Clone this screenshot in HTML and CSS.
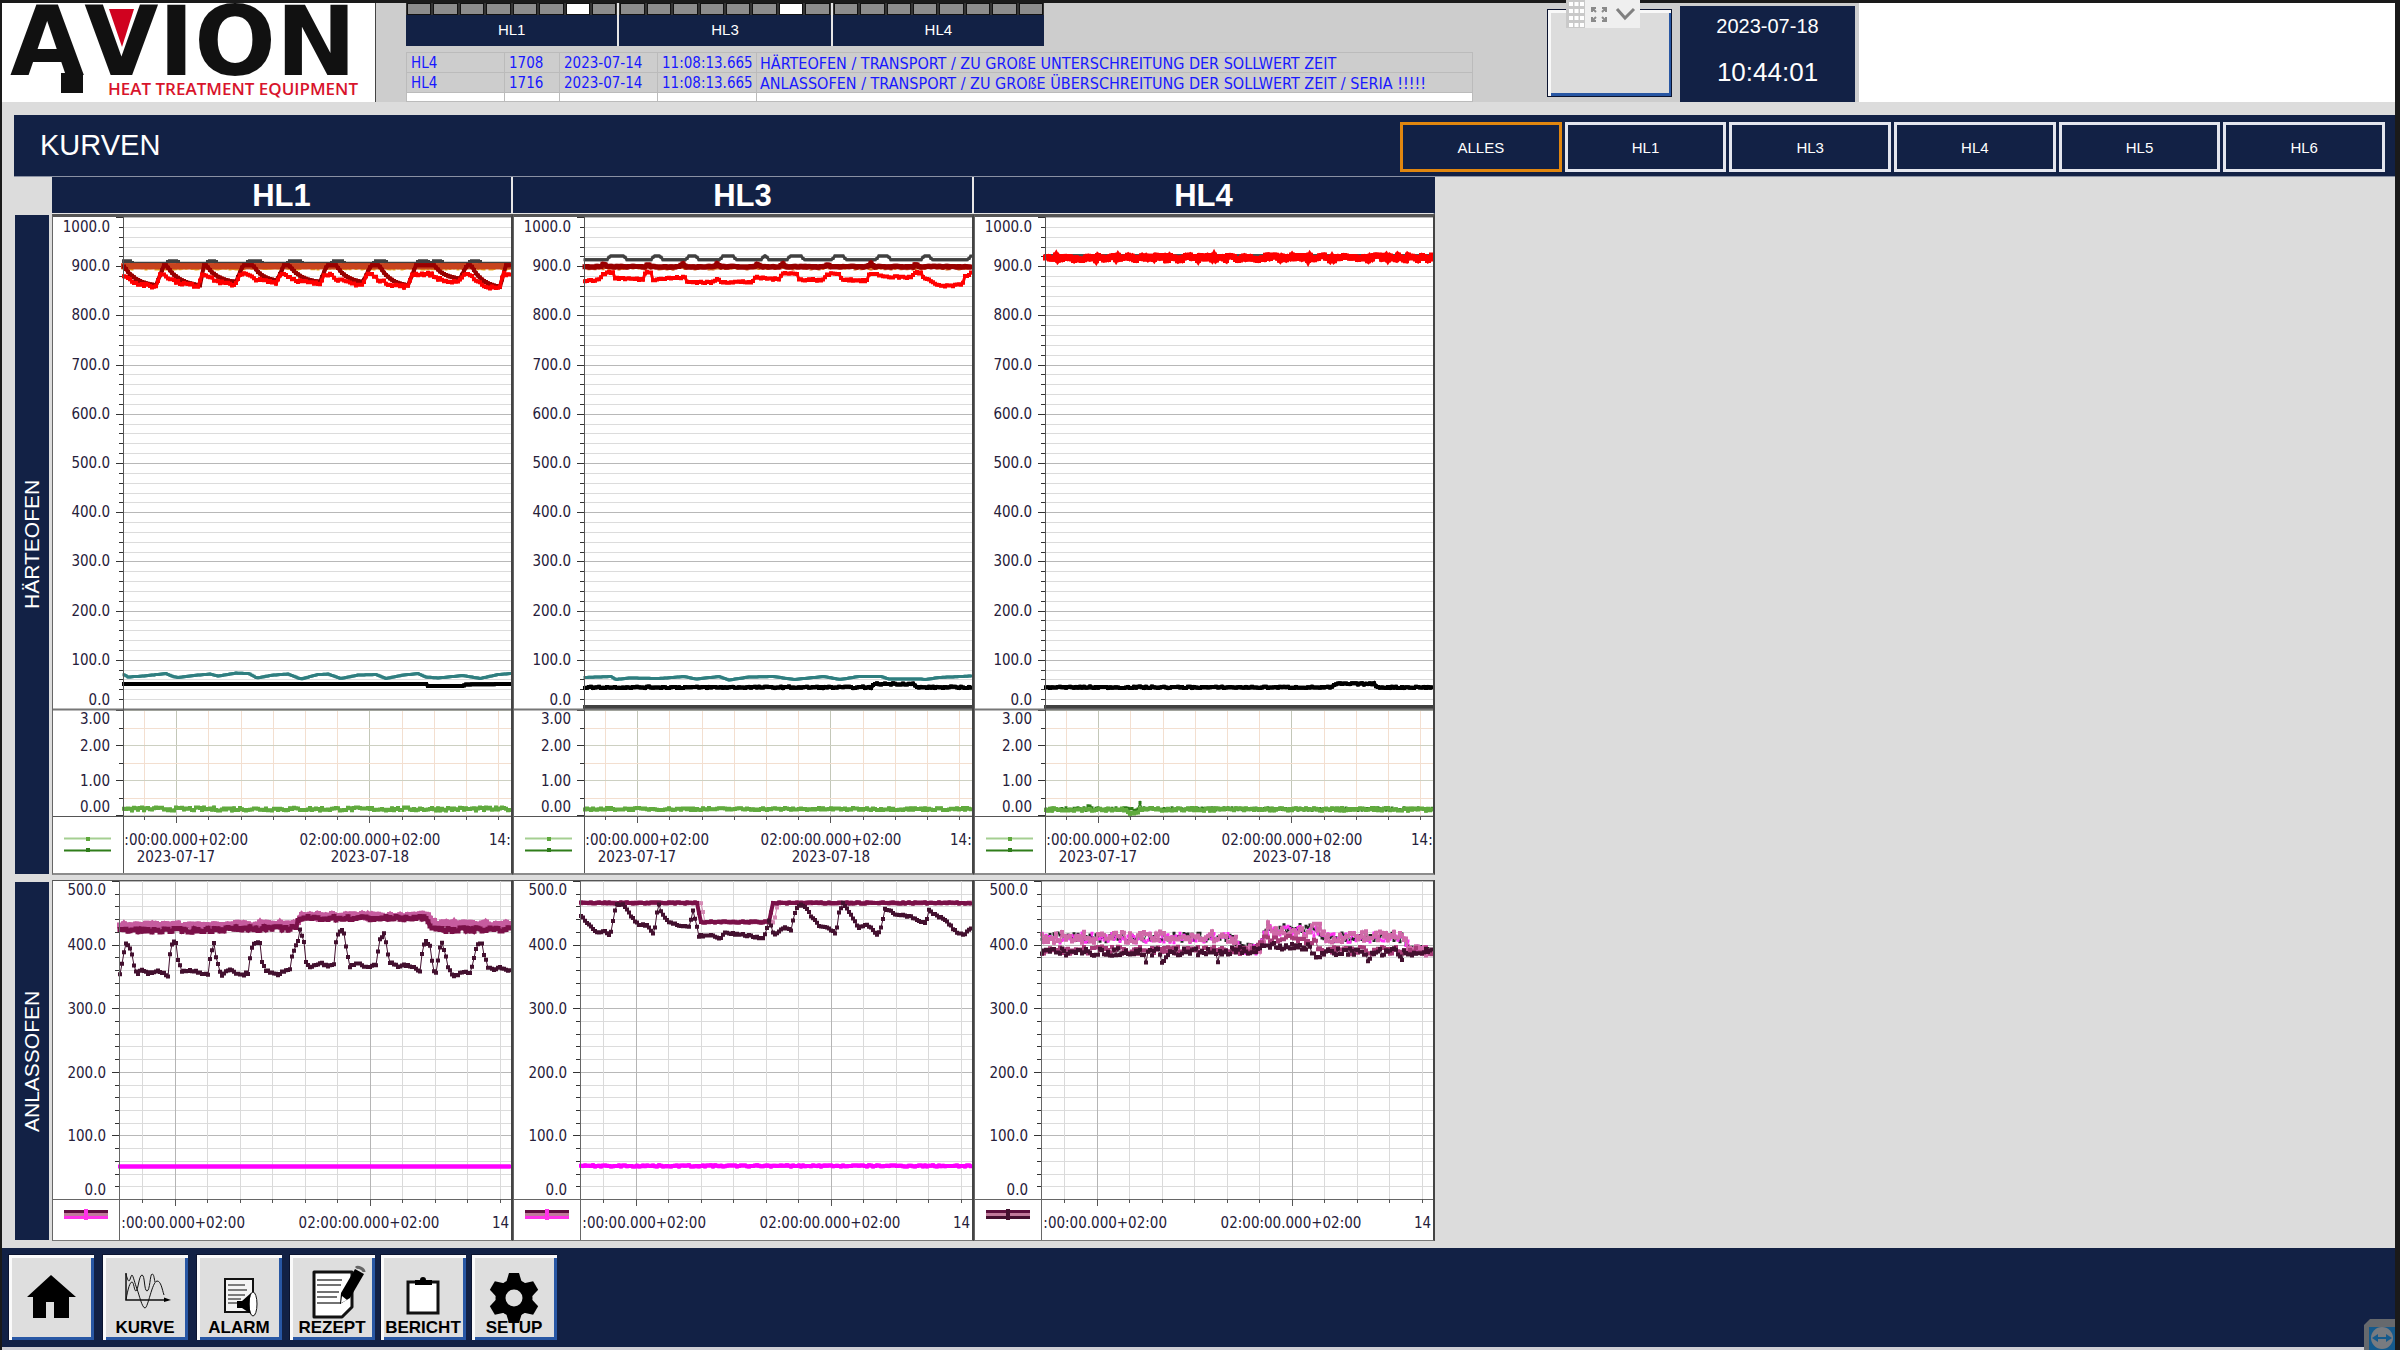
FILE: index.html
```html
<!DOCTYPE html>
<html lang="de">
<head>
    <meta charset="UTF-8">
    <meta name="viewport" content="width=device-width, initial-scale=1.0">
    <title>AVION - Kurven</title>
    <link rel="stylesheet" href="styles.css">
</head>
<body>
    <header class="topbar">
        <div class="logo">
            <span class="logo-name">AVION</span>
            <span class="logo-claim">HEAT TREATMENT EQUIPMENT</span>
            <svg class="logo-mark" viewBox="0 0 373 99" aria-hidden="true">
                <path d="M107 6h25l-12 38z" fill="#d0021f"/>
                <path d="M59 70h22v20H59z" fill="#111"/>
            </svg>
        </div>

        <div class="monitor">
            <div class="tabs">
                <button class="tab"><span class="lamps"><i></i><i></i><i></i><i></i><i></i><i></i><i class="on"></i><i></i></span>HL1</button>
                <button class="tab"><span class="lamps"><i></i><i></i><i></i><i></i><i></i><i></i><i class="on"></i><i></i></span>HL3</button>
                <button class="tab"><span class="lamps"><i></i><i></i><i></i><i></i><i></i><i></i><i></i><i></i></span>HL4</button>
            </div>
            <table class="alarms">
                <colgroup>
                    <col class="col-line"><col class="col-code"><col class="col-date"><col class="col-time"><col>
                </colgroup>
                <tbody>
                    <tr><td>HL4</td><td>1708</td><td>2023-07-14</td><td>11:08:13.665</td><td class="msg">HÄRTEOFEN / TRANSPORT / ZU GROßE UNTERSCHREITUNG DER SOLLWERT ZEIT</td></tr>
                    <tr><td>HL4</td><td>1716</td><td>2023-07-14</td><td>11:08:13.665</td><td class="msg">ANLASSOFEN / TRANSPORT / ZU GROßE ÜBERSCHREITUNG DER SOLLWERT ZEIT / SERIA !!!!!</td></tr>
                    <tr class="empty"><td></td><td></td><td></td><td></td><td></td></tr>
                </tbody>
            </table>
        </div>

        <button class="blank-button" aria-label="Quittieren"></button>

        <div class="clock">
            <span class="date">2023-07-18</span>
            <span class="time">10:44:01</span>
        </div>
        <div class="blank"></div>
    </header>

    <!-- remote session toolbar -->
    <div class="remote-bar">
        <svg viewBox="0 0 74 28" aria-hidden="true">
            <path d="M0 0h19v28H0z" fill="#c9c9c9"/>
            <path d="M19 0h55v28H19z" fill="#efefef"/>
            <path d="M3 4h16M3 11h16M3 18h16M3 25h16" stroke="#fff" stroke-width="4" stroke-dasharray="4 1.500"/>
            <path d="M30 12l-4-4m0 4V8h4M36 12l4-4m-4 0h4v4M30 17l-4 4m0-4v4h4M36 17l4 4m-4 0h4v-4" fill="none" stroke="#8a8a8a" stroke-width="2"/>
            <path d="M51 9l8 9 9-9" fill="none" stroke="#808080" stroke-width="3"/>
        </svg>
    </div>

    <main>
        <div class="titlebar">
            <h1>KURVEN</h1>
            <nav class="filters">
                <button class="active">ALLES</button>
                <button>HL1</button>
                <button>HL3</button>
                <button>HL4</button>
                <button>HL5</button>
                <button>HL6</button>
            </nav>
        </div>

        <div class="curves">
            <h2 class="first">HL1</h2>
            <h2>HL3</h2>
            <h2 class="last">HL4</h2>

            <div class="side upper">HÄRTEOFEN</div>
            <div class="chart upper" id="hard1"></div>
            <div class="chart upper" id="hard3"></div>
            <div class="chart upper" id="hard4"></div>

            <div class="side lower">ANLASSOFEN</div>
            <div class="chart lower" id="temper1"></div>
            <div class="chart lower" id="temper3"></div>
            <div class="chart lower" id="temper4"></div>
        </div>
    </main>

    <footer class="bottombar">
        <div class="nav-group wide">
            <button aria-label="Home">
                <svg viewBox="0 0 86 86"><path d="M19 43L43 21l25 22h-7v21H46V48h-8v16H25V43z"/></svg>
            </button>
            <button>
                <svg viewBox="0 0 86 86">
                    <g fill="none" stroke="#111">
                        <path d="M24 19v27h42" stroke-width="1.500"/>
                        <path d="M24 46c2-12 4-18 6-18s2 9 4 9 3-16 6-16 2 16 5 16 3-17 5-17 2 4 3 8"/>
                        <path d="M24 20c1 4 2 7 3 7s2-6 3-6 3 9 5 14 5 19 8 19 7-26 12-27c4 0 5 8 7 14"/>
                    </g>
                    <path d="M62 43.500l7 2.500-7 2z"/>
                </svg>
                <span>KURVE</span>
            </button>
            <button>
                <svg viewBox="0 0 86 86">
                    <path d="M29 25h28v33H29z" fill="#f4f4f4" stroke="#111" stroke-width="2"/>
                    <path d="M32 31h17M32 36h19M32 41h17M32 45h13M32 49h9" stroke="#555" stroke-width="1.500"/>
                    <ellipse cx="57" cy="50" rx="4" ry="12" fill="#fff" stroke="#111"/>
                    <path d="M41 47h5l9-8c-2 7-2 15 0 21l-9-6h-5z"/>
                </svg>
                <span>ALARM</span>
            </button>
        </div>
        <div class="nav-group">
            <button>
                <svg viewBox="0 0 86 86">
                    <path d="M25 18h38v35L53 63H25z" fill="#fff" stroke="#111" stroke-width="3" stroke-linejoin="round"/>
                    <path d="M28 26h25M28 31h24M28 38h22M28 43h20M28 49h24" stroke="#444" stroke-width="1.500"/>
                    <path d="M51 50l1-11 14-24 9 5-14 24z"/>
                    <path d="M52 49l1-7 5 4z" fill="#fff"/>
                    <path d="M67 14c2-2 8 1 8 4" fill="none" stroke="#666" stroke-width="3"/>
                </svg>
                <span>REZEPT</span>
            </button>
            <button>
                <svg viewBox="0 0 86 86">
                    <path d="M28 28h30v31H28z" fill="#fff" stroke="#111" stroke-width="3"/>
                    <path d="M35 31v-5h5q0-3 3-3t3 3h6v5z"/>
                </svg>
                <span>BERICHT</span>
            </button>
            <button>
                <svg viewBox="0 0 86 86">
                    <circle cx="43" cy="44" r="13.500" fill="none" stroke="#000" stroke-width="10"/>
                    <path id="tooth" d="M35 29l3-10h10l3 10z"/>
                    <use href="#tooth" transform="rotate(60 43 44)"/>
                    <use href="#tooth" transform="rotate(120 43 44)"/>
                    <use href="#tooth" transform="rotate(180 43 44)"/>
                    <use href="#tooth" transform="rotate(240 43 44)"/>
                    <use href="#tooth" transform="rotate(300 43 44)"/>
                </svg>
                <span>SETUP</span>
            </button>
        </div>
    </footer>

    <div class="remote-badge">
        <svg viewBox="0 0 31 31" aria-hidden="true">
            <path d="M0 31V6l6-6h25v31z" fill="#66696d"/>
            <path d="M5 8h26v23H5z" fill="#155a8c"/>
            <circle cx="18" cy="19" r="11" fill="#787b80"/>
            <path d="M8 19l6-4v3h8v-3l6 4-6 4v-3h-8v3z" fill="#155a8c"/>
        </svg>
    </div>

    <script src="charts.js"></script>
</body>
</html>
```
FILE: styles.css
```css
* {
    margin: 0;
    padding: 0;
    box-sizing: border-box;
}

body {
    display: flex;
    flex-direction: column;
    min-height: 100vh;
    border: 0 solid #1a1a1a;
    border-width: 3px 5px 0 2px;
    background: #dcdcdc;
    font-family: "Liberation Sans", Arial, sans-serif;
}

button {
    font-family: inherit;
    border: none;
    border-radius: 0;
    cursor: pointer;
}

/* top bar */
.topbar {
    display: flex;
    height: 99px;
    background: #cdcdcd;
}

.logo {
    display: grid;
    width: 374px;
    background: #fff;
    border-right: 1px solid #444;
}

.logo > * {
    grid-area: 1 / 1;
}

.logo-name {
    padding-left: 8px;
    font-family: "DejaVu Sans", sans-serif;
    font-weight: 700;
    font-size: 96px;
    font-kerning: none;
    line-height: 78px;
    color: #111;
}

.logo-claim {
    align-self: end;
    justify-self: end;
    padding: 0 17px 3px 0;
    font-family: "Open Sans", sans-serif;
    font-weight: 600;
    font-size: 17px;
    line-height: 20px;
    color: #d8142c;
}

.logo-mark {
    width: 373px;
    height: 99px;
}

.monitor {
    display: flex;
    flex-direction: column;
    gap: 6px;
    width: 1067px;
    margin-left: 30px;
}

.tabs {
    display: flex;
    gap: 2px;
    width: 638px;
    height: 43px;
    background: #e6e6e6;
}

.tab {
    display: flex;
    flex: 1;
    flex-direction: column;
    align-items: center;
    gap: 6px;
    background: #122145;
    color: #fff;
    font-size: 15px;
}

.lamps {
    display: flex;
    gap: 2px;
    width: 100%;
    padding: 0 1px;
    background: #333;
}

.lamps i {
    flex: 1;
    height: 12px;
    background: #8c8c8c;
    border: 1px solid #111;
}

.lamps .on {
    background: #fff;
}

.alarms {
    width: 100%;
    table-layout: fixed;
    border-collapse: collapse;
    border: 1px solid #85877a;
    font-family: "DejaVu Sans Condensed", "Noto Sans", sans-serif;
    font-size: 15px;
    line-height: 17px;
    color: #1818ff;
}

.col-line { width: 98px; }
.col-code { width: 55px; }
.col-date { width: 98px; }
.col-time { width: 99px; }

.alarms td {
    height: 19px;
    padding: 2px 0 0 4px;
    border: 1px solid #bbb;
    white-space: nowrap;
}

.alarms .msg {
    padding-left: 3px;
    font-size: 16px;
}

.alarms .empty td {
    height: 9px;
    padding: 0;
    background: #fff;
}

.blank-button {
    width: 125px;
    height: 88px;
    margin: 6px 8px 0 74px;
    background: #dcdcdc;
    border: 1px solid #0b1430;
    box-shadow: inset 3px 3px #f8f8f8, inset -2px -3px #2857a4;
}

.clock {
    display: flex;
    flex-direction: column;
    align-items: center;
    width: 175px;
    margin: 3px 4px 0 0;
    padding-top: 8px;
    background: #122145;
    color: #fff;
}

.clock .date {
    font-size: 20px;
    line-height: 24px;
}

.clock .time {
    padding-top: 18px;
    font-size: 26px;
    line-height: 32px;
}

.blank {
    flex: 1;
    background: #fff;
}

.remote-bar {
    position: absolute;
    top: 0;
    left: 1566px;
    width: 74px;
    height: 28px;
}

/* content */
main {
    padding: 13px 0 7px 12px;
}

.titlebar {
    display: flex;
    justify-content: space-between;
    align-items: center;
    height: 62px;
    padding: 0 10px 0 26px;
    background: #122145;
    border-bottom: 1px solid #8a91a3;
    color: #fff;
}

.titlebar h1 {
    font-size: 29px;
    font-weight: 400;
}

.filters {
    display: flex;
    gap: 3px;
    width: 985px;
}

.filters button {
    flex: 1;
    height: 50px;
    margin-top: 2px;
    padding-top: 2px;
    background: #122145;
    border: 3px solid #e4e6ee;
    color: #fff;
    font-size: 15px;
}

.filters .active {
    border-color: #e0860f;
}

/* five line columns, only the selected lines are filled */
.curves {
    display: grid;
    grid-template-columns: 38px repeat(5, 1fr);
    padding-right: 38px;
}

.curves h2 {
    height: 37px;
    background: #122145;
    border-right: 2px solid #e6e6e6;
    border-bottom: 1px solid #e6e6e6;
    color: #fff;
    font-size: 31px;
    line-height: 37px;
    text-align: center;
}

.curves .first {
    grid-column: 2;
}

.curves .last {
    border-right-color: #122145;
}

.side {
    grid-column: 1;
    display: flex;
    align-items: center;
    justify-content: center;
    margin: 1px 3px 1px 1px;
    writing-mode: vertical-rl;
    transform: rotate(180deg);
    background: #122145;
    color: #fff;
    font-size: 21px;
}

.chart {
    background: #fff;
    border-left: 1px solid #666;
    border-right: 2px solid #444;
}

.chart svg {
    display: block;
    width: 100%;
    height: auto;
}

.chart.upper {
    border-top: 3px solid #555;
    border-bottom: 2px solid #8c8c8c;
}

.chart.lower {
    margin-top: 5px;
    border-top: 1px solid #555;
    border-bottom: 1px solid #777;
}

.side.lower {
    margin-top: 7px;
}

.chart text {
    font-family: "DejaVu Sans Condensed", "Noto Sans", sans-serif;
    font-size: 15px;
    fill: #26203a;
}

/* bottom bar */
.bottombar {
    display: flex;
    gap: 7px;
    height: 102px;
    margin-top: auto;
    padding: 6px 6px 0;
    background: #122145;
    border-bottom: 3px solid #cfcfd4;
}

.nav-group {
    display: flex;
    gap: 5px;
}

.nav-group.wide {
    gap: 8px;
}

.nav-group button {
    display: grid;
    width: 86px;
    height: 86px;
    background: #dedede;
    box-shadow: inset 1px 1px #0b1430, inset 4px 4px #fafafa, inset -3px -3px #2857a4;
}

.nav-group svg,
.nav-group span {
    grid-area: 1 / 1;
}

.nav-group svg {
    width: 86px;
    height: 86px;
}

.nav-group span {
    align-self: end;
    justify-self: center;
    padding-bottom: 2px;
    font-size: 17px;
    font-weight: 700;
    color: #000;
}

.remote-badge {
    position: fixed;
    right: 5px;
    bottom: 0;
    width: 31px;
    height: 31px;
}
```
FILE: charts.js
```js
const WIDTH = 458;

// small seeded random so the curves look the same on every load
let seed = 7;
function rnd() {
    seed = (seed * 16807) % 2147483647;
    return seed / 2147483647 * 2 - 1;
}

// "x:value x:value ..." -> points
function pts(text) {
    return text.trim().split(/\s+/).map(p => p.split(':').map(Number));
}

function flat(v) {
    return [[0, v], [400, v]];
}

function bumps(base, high, ranges) {
    const out = [[0, base]];
    ranges.forEach(([a, b]) => out.push([a - 2, base], [a + 1, high], [b, high], [b + 3, base]));
    out.push([400, base]);
    return out;
}

// heat up, hold, then cool down exponentially
function decays(high, cycles) {
    const out = [];
    cycles.forEach(([start, hold, end, low]) => {
        out.push([start, high], [hold, high]);
        for (let i = 1; i <= 5; i++) {
            const t = i / 5;
            out.push([hold + (end - hold) * t, low + (high - low) * (Math.exp(-2.5 * t) - 0.08) / 0.92]);
        }
    });
    return out;
}

function valueAt(points, x) {
    for (let i = 1; i < points.length; i++) {
        if (x <= points[i][0]) {
            const [x0, v0] = points[i - 1];
            const [x1, v1] = points[i];
            return x1 === x0 ? v1 : v0 + (v1 - v0) * Math.max(0, x - x0) / (x1 - x0);
        }
    }
    return points[points.length - 1][1];
}

function drawSeries(s, left, toY) {
    let line = '';
    let dots = '';
    for (let x = 1; left + x < WIDTH; x += 2) {
        const y = toY(valueAt(s.points, x) + rnd() * (s.noise || 0)).toFixed(1);
        line += (line ? 'L' : 'M') + (left + x) + ' ' + y;
        dots += `M${left + x} ${y}h0`;
    }
    return `<path d="${line}" fill="none" stroke="${s.color}" stroke-width="${s.line || s.size / 2}"/>` +
        `<path d="${dots}" stroke="${s.color}" stroke-width="${s.size}" stroke-linecap="square"/>`;
}

function hline(x1, x2, y, color, w) {
    return `<path d="M${x1} ${Math.round(y) + 0.5}H${x2}" stroke="${color}" stroke-width="${w || 1}"/>`;
}

function vline(x, y1, y2, color, w) {
    return `<path d="M${Math.round(x) + 0.5} ${y1}V${y2}" stroke="${color}" stroke-width="${w || 1}"/>`;
}

function text(x, y, anchor, str) {
    return `<text x="${x}" y="${y}" text-anchor="${anchor}">${str}</text>`;
}

function timeAxis(top, first, step, gridTop, major, minor) {
    let grid = '';
    let ticks = '';
    for (let i = 0; i < 12; i++) {
        const isMajor = i % 6 === 1;
        const x = first + i * step;
        grid += vline(x, gridTop, top, isMajor ? major : minor);
        ticks += vline(x, top, top + (isMajor ? 7 : 4), '#555');
    }
    return { grid, ticks };
}

function valueAxis(left, top, bottom, count, sub, major, minor) {
    let out = '';
    const step = (bottom - top) / (count * sub);
    for (let i = 0; i <= count * sub; i++) {
        const isMajor = i % sub === 0;
        const y = top + i * step;
        out += hline(left, WIDTH, y, isMajor ? major : minor);
        out += hline(isMajor ? left - 7 : left - 4, left, y, '#333');
    }
    return out;
}

function hardening(id, series, green) {
    const left = 70;
    const time = timeAxis(599, 91, 32.2, 494, '#c3c7b8', '#f3dfd0');
    let svg = valueAxis(left, 0, 492, 10, 5, '#b8b8b8', '#dcdcdc');
    svg += time.grid + valueAxis(left, 493, 598, 3, 2, '#cdd0c2', '#f3dfd0');
    series.forEach(s => svg += drawSeries(s, left, v => 492 - v * 0.492));
    svg += hline(0, WIDTH, 492, '#777', 2);
    green.forEach(s => svg += drawSeries(s, left, v => 598 - v * 35));
    svg += hline(0, WIDTH, 599, '#555') + time.ticks + vline(left, 0, 656, '#555');

    svg += text(57, 15, 'end', '1000.0');
    for (let v = 900; v > 0; v -= 100) {
        svg += text(57, Math.round(497 - v * 0.492), 'end', v + '.0');
    }
    svg += text(57, 488, 'end', '0.0');
    svg += text(57, 507, 'end', '3.00') + text(57, 534, 'end', '2.00');
    svg += text(57, 569, 'end', '1.00') + text(57, 595, 'end', '0.00');

    svg += text(195, 628, 'end', ':00:00.000+02:00') + text(123, 645, 'middle', '2023-07-17');
    svg += text(317, 628, 'middle', '02:00:00.000+02:00') + text(317, 645, 'middle', '2023-07-18');
    svg += text(436, 628, 'start', '14:');

    svg += hline(11, 58, 621, '#a5cf92', 2) + '<path d="M33 620h4v4h-4z" fill="#5fa83c"/>';
    svg += hline(11, 58, 633, '#2f7d1a', 2) + '<path d="M33 631h4v4h-4z" fill="#2f7d1a"/>';
    document.getElementById(id).innerHTML = `<svg viewBox="0 0 ${WIDTH} 656">${svg}</svg>`;
}

function tempering(id, series, lastColor) {
    const left = 66;
    const time = timeAxis(318, 89, 32.5, 0, '#b5b5b5', '#dadada');
    let svg = valueAxis(left, 0, 318, 5, 5, '#b8b8b8', '#dcdcdc') + time.grid;
    series.forEach(s => svg += drawSeries(s, left, v => 318 - v * 0.6366));
    svg += hline(0, WIDTH, 318, '#666') + time.ticks + vline(left, 0, 359, '#666');

    svg += text(53, 14, 'end', '500.0');
    for (let v = 400; v > 0; v -= 100) {
        svg += text(53, Math.round(324 - v * 0.6366), 'end', v + '.0');
    }
    svg += text(53, 314, 'end', '0.0');
    svg += text(192, 347, 'end', ':00:00.000+02:00') + text(316, 347, 'middle', '02:00:00.000+02:00');
    svg += text(439, 347, 'start', '14');

    svg += '<path d="M11 329h44v3H11z" fill="#5d0f3d"/><path d="M11 332h44v3H11z" fill="#c07a9a"/>';
    svg += `<path d="M11 335h44v3H11z" fill="${lastColor}"/><path d="M31 328h4v11h-4z" fill="${lastColor}"/>`;
    document.getElementById(id).innerHTML = `<svg viewBox="0 0 ${WIDTH} 359">${svg}</svg>`;
}

const GREEN = '#60aa3e';
const WINE = '#7a1048';
const PINK = '#c65c9f';
const PLUM = '#43102f';

hardening('hard1', [
    { color: '#404040', size: 4, points: bumps(905, 910, [[0, 7], [45, 54], [85, 92], [125, 137], [166, 177], [210, 219], [252, 262], [295, 304], [310, 318], [347, 356]]) },
    { color: '#e8b020', size: 3, noise: 2, points: flat(896) },
    { color: '#c8431e', size: 6, line: 6, points: flat(900) },
    { color: '#990000', size: 4, line: 4, points: decays(902, [[0, 0, 33, 861], [41, 43, 77, 861], [81, 83, 113, 868], [120, 130, 154, 871], [161, 166, 197, 868], [204, 213, 240, 868], [248, 256, 285, 861], [293, 311, 337, 875], [344, 348, 377, 858], [383, 388, 400, 880]]) },
    { color: '#ff0000', size: 4, line: 3, noise: 3, points: decays(884, [[0, 0, 33, 858], [37, 41, 76, 860], [78, 83, 112, 862], [117, 123, 154, 867], [157, 162, 197, 864], [201, 207, 240, 862], [244, 248, 285, 858], [289, 308, 336, 866], [340, 347, 376, 854], [380, 388, 400, 880]]) },
    { color: '#2f7f80', size: 3, line: 3, points: pts('0:71 5:65 20:67 43:72 50:66 55:64 70:68 87:71 95:67 113:73 126:72 134:63 150:69 165:71 178:61 195:70 205:71 218:62 235:69 253:70 263:62 280:69 295:72 303:65 315:63 340:68 357:62 375:70 387:72') },
    { color: '#000', size: 4, line: 4, points: pts('0:51 303:51 305:47 340:47 343:50 400:51') }
], [{ color: GREEN, size: 4, line: 3, noise: 0.045, points: flat(0.17) }]);

hardening('hard3', [
    { color: '#404040', size: 3, line: 3, points: bumps(913, 921, [[25, 40], [69, 76], [104, 112], [138, 149], [179, 182], [205, 217], [250, 259], [294, 304], [339, 345], [386, 390]]) },
    { color: '#d8702a', size: 3, noise: 3, points: flat(897) },
    { color: '#990000', size: 5, line: 5, noise: 1, points: bumps(899, 905, [[19, 20], [63, 64], [98, 99], [132, 133], [173, 174], [198, 199], [243, 244], [286, 287], [331, 332]]) },
    { color: '#ff0000', size: 4, line: 3, noise: 2, points: pts('0:871 16:872 18:885 30:888 31:876 60:873 61:887 68:889 69:873 95:877 101:877 103:868 130:867 132:875 138:868 168:868 172:877 195:873 198:887 213:884 215:873 240:872 243:884 255:885 256:874 283:870 285:884 297:882 298:879 328:877 330:888 337:886 340:875 345:872 350:864 360:859 378:862 381:880 388:886') },
    { color: '#2f7f80', size: 3, line: 3, points: pts('0:64 27:66 32:60 45:63 75:62 100:66 112:61 135:66 145:59 165:65 190:66 210:60 240:66 256:60 275:66 297:66 305:61 335:61 342:60 355:64 387:67') },
    { color: '#000', size: 4, line: 4, noise: 1.5, points: pts('0:44 288:44 290:51 330:51 332:44 400:44') },
    { color: '#404040', size: 4, line: 4, points: flat(4) }
], [{ color: GREEN, size: 4, line: 3, noise: 0.03, points: flat(0.17) }]);

hardening('hard4', [
    { color: '#445555', size: 4, line: 4, points: flat(921) },
    { color: '#ff0000', size: 6, line: 6, noise: 5, points: flat(917) },
    { color: '#000', size: 4, line: 4, noise: 1.5, points: pts('0:44 288:44 290:51 330:51 332:44 400:44') },
    { color: '#404040', size: 4, line: 4, points: flat(4) }
], [
    { color: '#2f7d1a', size: 3, noise: 0.04, points: pts('0:0.17 42:0.17 44:0.32 46:0.17 93:0.17 95:0.36 97:0.17 400:0.17') },
    { color: GREEN, size: 4, line: 3, noise: 0.04, points: pts('0:0.16 82:0.16 84:0.03 92:0.03 94:0.16 400:0.16') }
]);

tempering('temper1', [
    { color: PINK, size: 6, line: 6, noise: 3, points: pts('0:429 120:431 178:432 182:445 310:445 316:432 400:431') },
    { color: WINE, size: 5, line: 4, noise: 3, points: pts('0:422 80:422 120:425 177:425 180:441 308:441 314:423 400:424') },
    { color: PLUM, size: 4, line: 1, noise: 2, points: pts('1:352 4:381 7:402 10:400 13:384 15:365 18:353 24:361 29:354 37:359 47:352 49:350 51:384 54:405 57:402 59:376 63:358 76:359 89:352 91:376 95:402 97:381 101:358 103:352 111:360 122:351 129:355 132:392 136:402 141:401 143:371 147:359 159:353 171:361 173:381 179:407 181:423 185:402 187:371 191:363 202:371 209:366 215:370 217:402 220:420 224:425 227:397 231:363 237:372 247:364 257:368 261:407 265:419 267:405 270:373 279:366 287:368 301:359 303:386 306:407 311:397 314:365 316:347 319:376 322:405 326:389 329:365 334:350 342:355 352:355 356:386 358:401 363:402 365:384 369:365 374:360 379:365 391:358') },
    { color: '#ff00ff', size: 4, line: 4, points: flat(51) }
], '#ff30e8');

tempering('temper3', [
    { color: '#d48ab4', size: 4, line: 1, noise: 1, points: pts('0:465 121:465 125:435 194:435 198:465 400:465') },
    { color: WINE, size: 4, line: 4, noise: 1, points: pts('0:465 117:465 121:435 189:435 193:465 400:465') },
    { color: PLUM, size: 4, line: 1, noise: 1.5, points: pts('1:444 9:432 17:418 26:421 30:412 32:429 36:462 44:462 51:444 58:432 67:430 74:416 77:450 79:462 82:447 88:435 103:429 109:427 113:452 116:435 119:413 129:415 142:409 144:418 169:414 184:409 189:438 193:419 196:416 204:427 211:422 214:447 218:462 224:462 233:440 241:427 246:429 256:416 259:450 263:464 273:441 278:427 288:430 298:415 302:432 305:457 316:447 331:444 346:432 349:453 354:447 366:438 378:416 384:416 392:426') },
    { color: '#ff00ff', size: 4, line: 4, noise: 1, points: flat(52) }
], '#ff30e8');

tempering('temper4', [
    { color: '#222222', size: 3, line: 1, noise: 7, points: pts('0:411 192:411 200:394 218:394 226:425 275:424 282:411 360:411 370:392 400:392') },
    { color: '#ff30f0', size: 3, line: 1, noise: 8, points: pts('0:410 192:410 200:392 218:393 226:422 280:420 284:411 360:411 370:392 400:392') },
    { color: '#d06aa8', size: 4, line: 2, noise: 9, points: pts('0:411 192:412 200:392 218:392 223:410 226:432 235:420 268:420 274:428 280:424 286:412 360:412 370:390 400:390') },
    { color: '#a83c78', size: 4, line: 1, noise: 6, points: pts('0:391 215:391 222:408 270:408 282:390 400:390') },
    { color: PLUM, size: 4, line: 1, noise: 6, points: pts('0:388 68:388 70:377 72:388 102:388 104:372 107:388 119:388 121:370 126:388 174:388 177:375 180:388 210:391 222:397 265:397 275:384 278:372 282:389 323:389 327:368 330:388 358:388 360:375 364:388 400:388') }
], '#43102f');
```
